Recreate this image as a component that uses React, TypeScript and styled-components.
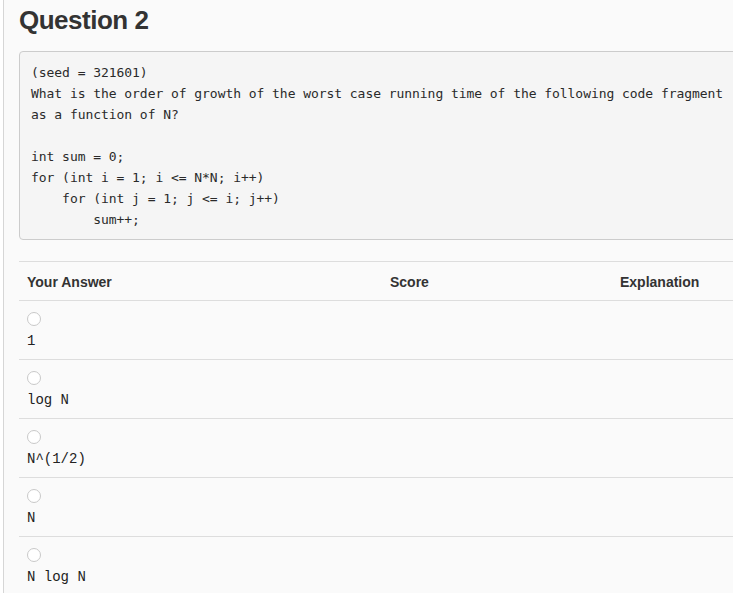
import React from "react";
import styled, { createGlobalStyle } from "styled-components";

const GlobalStyle = createGlobalStyle`
  html, body {
    margin: 0;
    padding: 0;
    background: #ffffff;
    overflow: hidden;
  }
`;

// Layout
const Page = styled.div`
  margin-left: 3px;
  border-left: 1px solid #d6d6d6;
  background: #fafafa;
  min-height: 593px;
  padding: 0 0 0 15px;
  width: 820px;
  color: #333;
  font-family: "Liberation Sans", Arial, sans-serif;
`;

const Title = styled.h2`
  margin: 0;
  padding-top: 5px;
  height: 46px;
  font-size: 26px;
  line-height: 30px;
  font-weight: bold;
  letter-spacing: -0.5px;
  color: #333;
`;

const Prompt = styled.pre`
  margin: 0 0 21px;
  padding: 10px 11px 9px;
  background: #f5f5f5;
  border: 1px solid #cccccc;
  border-radius: 4px;
  font-family: "DejaVu Sans Mono", Menlo, monospace;
  font-size: 13px;
  line-height: 21px;
  letter-spacing: -0.05px;
  color: #2a2a2a;
  white-space: pre;
`;

const Table = styled.table`
  width: 100%;
  border-collapse: collapse;
  border-spacing: 0;
`;

const HeadCell = styled.th<{ $w?: number }>`
  text-align: left;
  font-size: 14px;
  font-weight: bold;
  line-height: 20px;
  padding: 9px 8px 8px;
  height: 21px;
  width: ${(p) => (p.$w ? `${p.$w}px` : "auto")};
  border-top: 1px solid #dddddd;
  border-bottom: 1px solid #dddddd;
  color: #333;
  box-sizing: content-box;
`;

const Cell = styled.td`
  padding: 8px;
  vertical-align: top;
  border-bottom: 1px solid #dddddd;
`;

const Radio = styled.span`
  display: block;
  width: 12px;
  height: 12px;
  margin: 3px 0 5px;
  border: 1px solid #c9c9c9;
  border-radius: 50%;
  background: #ffffff;
`;

const AnswerText = styled.div`
  font-family: "Liberation Mono", "Courier New", monospace;
  font-size: 14px;
  line-height: 20px;
  color: #222;
  white-space: pre;
`;

const prompt = `(seed = 321601)
What is the order of growth of the worst case running time of the following code fragment
as a function of N?

int sum = 0;
for (int i = 1; i <= N*N; i++)
    for (int j = 1; j <= i; j++)
        sum++;`;

const answers = ["1", "log N", "N^(1/2)", "N", "N log N"];

export default function App() {
  return (
    <>
      <GlobalStyle />
      <Page>
        <Title>Question 2</Title>
        <Prompt>{prompt}</Prompt>
        <Table>
          <thead>
            <tr>
              <HeadCell $w={347}>Your Answer</HeadCell>
              <HeadCell $w={214}>Score</HeadCell>
              <HeadCell>Explanation</HeadCell>
            </tr>
          </thead>
          <tbody>
            {answers.map((a) => (
              <tr key={a}>
                <Cell>
                  <Radio />
                  <AnswerText>{a}</AnswerText>
                </Cell>
                <Cell />
                <Cell />
              </tr>
            ))}
          </tbody>
        </Table>
      </Page>
    </>
  );
}
